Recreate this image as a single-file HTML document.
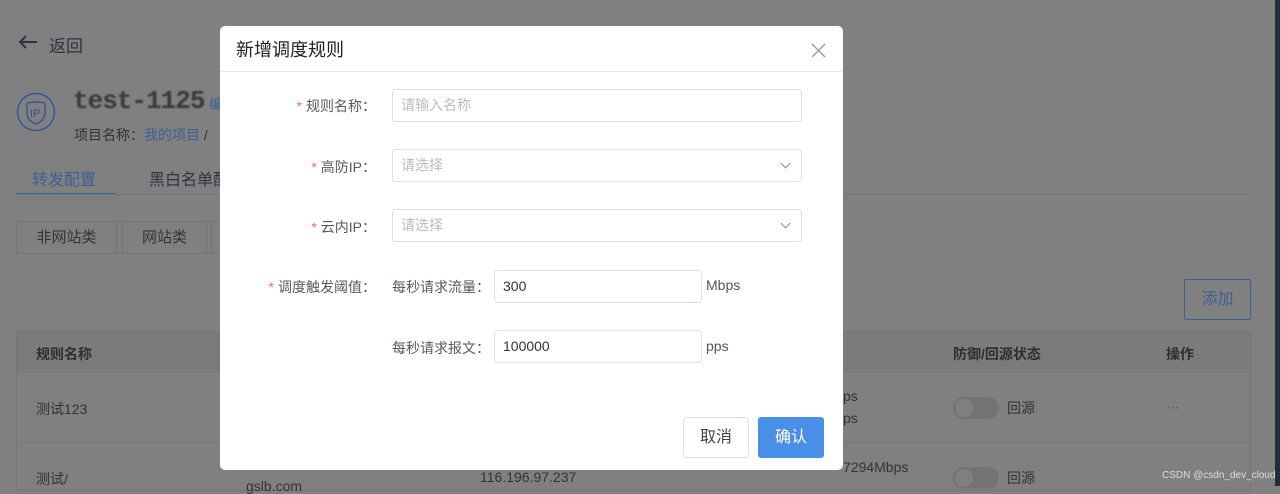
<!DOCTYPE html>
<html><head><meta charset="utf-8"><style>
*{margin:0;padding:0;box-sizing:border-box}
body{width:1280px;height:486px;overflow:hidden;background:#808080;font-family:"Liberation Sans","Noto Sans CJK SC",sans-serif;position:relative;color:#333}
.a{position:absolute;white-space:nowrap}
.bt{color:#2e3440}
.blue{color:#3d5f92}
.modal{position:absolute;left:220px;top:26px;width:623px;height:444px;background:#fff;border-radius:5px}
.inp{position:absolute;border:1px solid #dcdfe6;border-radius:3px;height:33px;font-size:14px;line-height:31px;padding-left:8px;color:#333}
.ph{color:#b8bcc4}
.lab{position:absolute;font-size:14px;color:#555a62;text-align:right;white-space:nowrap}
.star{color:#f56c6c;margin-right:4px}
.chev{position:absolute;right:12px;top:10px;width:7px;height:7px;border-right:1.2px solid #888;border-bottom:1.2px solid #888;transform:rotate(45deg)}
</style></head><body>
<svg class="a" style="left:18px;top:35px" width="20" height="14" viewBox="0 0 20 14"><path d="M19 7H2M8 1L2 7L8 13" fill="none" stroke="#2e3440" stroke-width="2"/></svg>
<div class="a bt" style="left:49px;top:32px;font-size:17px">返回</div>
<svg class="a" style="left:16px;top:92px" width="41" height="41" viewBox="0 0 41 41"><circle cx="20" cy="20" r="18.5" fill="none" stroke="#33549a" stroke-width="1.4"/><path d="M11 11 Q20 9 29 11 L29 22 Q28 29 20 32 Q12 29 11 22 Z" fill="none" stroke="#33549a" stroke-width="1.4"/><text x="14" y="25" font-size="11" fill="#33549a" font-family="Liberation Sans">IP</text></svg>
<div class="a" style="left:73px;top:86px;font-size:26px;font-family:'Liberation Mono',monospace;font-weight:bold;color:#3a3a3a;filter:blur(0.8px);letter-spacing:-1px">test-1125</div>
<div class="a blue" style="left:209px;top:94px;font-size:14px">编</div>
<div class="a" style="left:74px;top:125px;font-size:14px;color:#333">项目名称：<span class="blue">我的项目</span> /</div>
<div class="a blue" style="left:32px;top:166px;font-size:16px">转发配置</div>
<div class="a bt" style="left:149px;top:166px;font-size:16px">黑白名单配</div>
<div class="a" style="left:16px;top:193px;width:100px;height:2px;background:#3a64a8"></div>
<div class="a" style="left:16px;top:194px;width:1234px;height:1px;background:#747474"></div>
<div class="a" style="left:16px;top:221px;width:101px;height:33px;border:1px solid #747474;border-bottom:none;font-size:15px;text-align:center;line-height:32px;color:#333">非网站类</div>
<div class="a" style="left:122px;top:221px;width:85px;height:33px;border:1px solid #747474;border-bottom:none;font-size:15px;text-align:center;line-height:32px;color:#333">网站类</div>
<div class="a" style="left:211px;top:221px;width:20px;height:33px;border:1px solid #747474;border-bottom:none"></div>
<div class="a" style="left:16px;top:253px;width:210px;height:1px;background:#747474"></div>
<div class="a blue" style="left:1184px;top:279px;width:67px;height:41px;border:1px solid #3d5f92;border-radius:2px;font-size:16px;text-align:center;line-height:39px">添加</div>
<div class="a" style="left:16px;top:331px;width:1235px;height:160px;border:1px solid #767676"></div>
<div class="a" style="left:17px;top:332px;width:1233px;height:40px;background:#7b7b7b;border-bottom:1px solid #767676"></div>
<div class="a" style="left:17px;top:442px;width:1233px;height:1px;background:#767676"></div>
<div class="a" style="left:36px;top:344px;font-size:14px;font-weight:bold;color:#2e2e2e">规则名称</div>
<div class="a" style="left:953px;top:344px;font-size:14px;font-weight:bold;color:#2e2e2e">防御/回源状态</div>
<div class="a" style="left:1166px;top:344px;font-size:14px;font-weight:bold;color:#2e2e2e">操作</div>
<div class="a" style="left:36px;top:399px;font-size:14px;color:#333">测试123</div>
<div class="a" style="left:36px;top:469px;font-size:14px;color:#333">测试/</div>
<div class="a" style="left:843px;top:388px;font-size:14px;color:#333">ps</div>
<div class="a" style="left:843px;top:410px;font-size:14px;color:#333">ps</div>
<div class="a" style="left:843px;top:459px;font-size:14px;color:#333">7294Mbps</div>
<div class="a" style="left:480px;top:469px;font-size:14px;color:#333">116.196.97.237</div>
<div class="a" style="left:246px;top:478px;font-size:14px;color:#333">gslb.com</div>
<div class="a" style="left:953px;top:397px;width:46px;height:22px;border-radius:11px;background:#737373"></div>
<div class="a" style="left:955px;top:399px;width:18px;height:18px;border-radius:9px;background:#808080"></div>
<div class="a" style="left:1007px;top:398px;font-size:14px;color:#333">回源</div>
<div class="a" style="left:953px;top:467px;width:46px;height:22px;border-radius:11px;background:#737373"></div>
<div class="a" style="left:955px;top:469px;width:18px;height:18px;border-radius:9px;background:#808080"></div>
<div class="a" style="left:1007px;top:468px;font-size:14px;color:#333">回源</div>
<div class="a" style="left:1167px;top:400px;font-size:12px;color:#444">···</div>
<div class="a" style="left:1162px;top:470px;font-size:10px;color:#ddd">CSDN @csdn_dev_cloud</div>
<div class="a" style="left:1275px;top:0;width:5px;height:486px;background:#252b3a"></div>

<div class="modal">
 <div class="a" style="left:16px;top:10px;font-size:18px;color:#222">新增调度规则</div>
 <svg class="a" style="left:591px;top:17px" width="15" height="15" viewBox="0 0 15 15"><path d="M1 1L14 14M14 1L1 14" stroke="#999" stroke-width="1.3"/></svg>
 <div class="a" style="left:0;top:45px;width:623px;height:1px;background:#e8e8e8"></div>

 <div class="lab" style="right:467px;top:70px"><span class="star">*</span>规则名称：</div>
 <div class="inp" style="left:172px;top:63px;width:410px"><span class="ph">请输入名称</span></div>

 <div class="lab" style="right:467px;top:131px"><span class="star">*</span>高防IP：</div>
 <div class="inp" style="left:172px;top:123px;width:410px"><span class="ph">请选择</span><i class="chev"></i></div>

 <div class="lab" style="right:467px;top:191px"><span class="star">*</span>云内IP：</div>
 <div class="inp" style="left:172px;top:183px;width:410px"><span class="ph">请选择</span><i class="chev"></i></div>

 <div class="lab" style="right:467px;top:251px"><span class="star">*</span>调度触发阈值：</div>
 <div class="lab" style="left:172px;top:251px">每秒请求流量：</div>
 <div class="inp" style="left:274px;top:244px;width:208px">300</div>
 <div class="a" style="left:486px;top:251px;font-size:14px;color:#555">Mbps</div>

 <div class="lab" style="left:172px;top:312px">每秒请求报文：</div>
 <div class="inp" style="left:274px;top:304px;width:208px">100000</div>
 <div class="a" style="left:486px;top:312px;font-size:14px;color:#555">pps</div>

 <div class="a" style="left:463px;top:391px;width:66px;height:41px;border:1px solid #dcdfe6;border-radius:3px;font-size:16px;text-align:center;line-height:39px;color:#444">取消</div>
 <div class="a" style="left:538px;top:391px;width:66px;height:41px;background:#4a8fe7;border-radius:3px;font-size:16px;text-align:center;line-height:41px;color:#fff">确认</div>
</div>
</body></html>
